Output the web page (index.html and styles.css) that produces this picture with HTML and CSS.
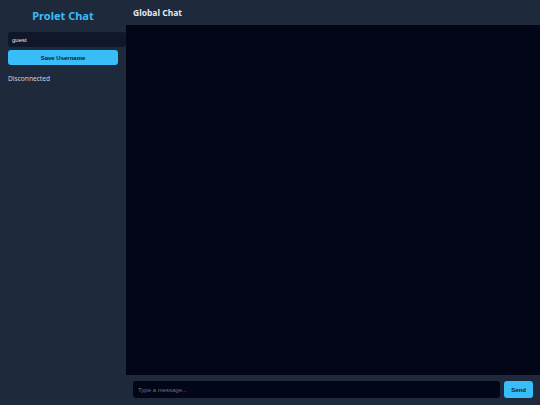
FILE: index.html
```html
<!DOCTYPE html>
<html lang="en">
<head>
<meta charset="utf-8">
<title>Prolet Chat</title>
<link rel="stylesheet" href="styles.css">
</head>
<body>
<div class="app">
  <aside class="sidebar">
    <h1 class="title">Prolet Chat</h1>
    <input class="name-input" type="text" value="guest">
    <button class="save-btn">Save Username</button>
    <div class="status">Disconnected</div>
  </aside>
  <main class="main">
    <header class="chat-header">Global Chat</header>
    <div class="messages"></div>
    <div class="composer">
      <input class="msg-input" type="text" placeholder="Type a message...">
      <button class="send-btn">Send</button>
    </div>
  </main>
</div>
</body>
</html>
```

FILE: styles.css
```css
* { box-sizing: border-box; }
html, body { margin: 0; padding: 0; height: 100%; }
body {
  font-family: "Noto Sans", "Open Sans", sans-serif;
  background: #1e293b;
  color: #e2e8f0;
}
.app {
  display: flex;
  height: 405px;
  width: 540px;
}
.sidebar {
  width: 126px;
  flex: none;
  background: #1e293b;
  padding: 8px 8px;
  display: flex;
  flex-direction: column;
  align-items: flex-start;
  position: relative;
  z-index: 1;
}
.title {
  align-self: stretch;
  margin: 0 0 8px;
  font-size: 11px;
  line-height: 16px;
  font-weight: 700;
  text-align: center;
  color: #38bdf8;
}
.name-input {
  width: 118px;
  height: 15px;
  border: none;
  border-radius: 3px;
  background: #0f172a;
  color: #e2e8f0;
  font-family: "Liberation Sans", sans-serif;
  font-size: 6px;
  padding: 0 4px;
  outline: none;
}
.save-btn {
  margin-top: 3px;
  width: 110px;
  height: 15px;
  border: none;
  border-radius: 3px;
  background: #38bdf8;
  color: #0f172a;
  font-family: "Liberation Sans", sans-serif;
  font-weight: 700;
  font-size: 6px;
  padding: 0;
}
.status {
  margin-top: 9px;
  font-size: 6.6px;
  line-height: 9px;
  color: #cbd5e1;
}
.main {
  flex: 1;
  display: flex;
  flex-direction: column;
  min-width: 0;
}
.chat-header {
  height: 25px;
  flex: none;
  padding: 0 7px 1px;
  display: flex;
  align-items: center;
  font-size: 8.5px;
  font-weight: 700;
  color: #e2e8f0;
  background: #1e293b;
}
.messages {
  flex: 1;
  background: #020617;
}
.composer {
  flex: none;
  display: flex;
  gap: 4px;
  padding: 6px 7px 7px;
  background: #1e293b;
}
.msg-input {
  flex: 1;
  height: 17px;
  border: none;
  border-radius: 3px;
  background: #020617;
  color: #e2e8f0;
  font-family: "Liberation Sans", sans-serif;
  font-size: 6px;
  padding: 0 5px;
  outline: none;
}
.msg-input::placeholder { color: #64748b; }
.send-btn {
  width: 29px;
  height: 17px;
  border: none;
  border-radius: 3px;
  background: #38bdf8;
  color: #0f172a;
  font-family: "Liberation Sans", sans-serif;
  font-weight: 700;
  font-size: 6px;
  padding: 0;
}
```
